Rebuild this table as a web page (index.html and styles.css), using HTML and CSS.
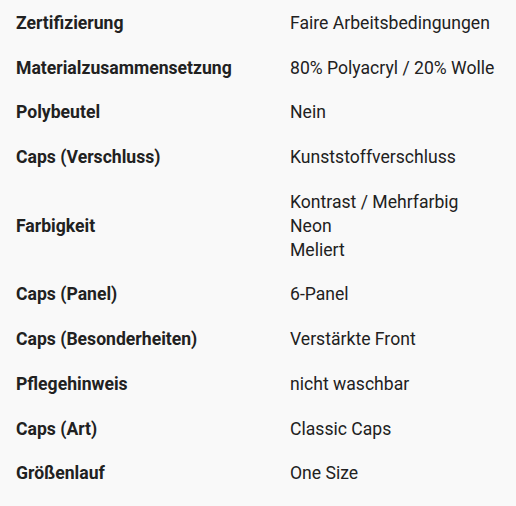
FILE: index.html
```html
<!DOCTYPE html>
<html lang="de">
<head>
<meta charset="utf-8">
<link rel="stylesheet" href="styles.css">
</head>
<body>
<dl class="specs">
  <div class="row"><dt>Zertifizierung</dt><dd>Faire Arbeitsbedingungen</dd></div>
  <div class="row"><dt>Materialzusammensetzung</dt><dd>80% Polyacryl / 20% Wolle</dd></div>
  <div class="row"><dt>Polybeutel</dt><dd>Nein</dd></div>
  <div class="row"><dt>Caps (Verschluss)</dt><dd>Kunststoffverschluss</dd></div>
  <div class="row"><dt>Farbigkeit</dt><dd><span>Kontrast / Mehrfarbig</span><span>Neon</span><span>Meliert</span></dd></div>
  <div class="row"><dt>Caps (Panel)</dt><dd>6-Panel</dd></div>
  <div class="row"><dt>Caps (Besonderheiten)</dt><dd>Verstärkte Front</dd></div>
  <div class="row"><dt>Pflegehinweis</dt><dd>nicht waschbar</dd></div>
  <div class="row"><dt>Caps (Art)</dt><dd>Classic Caps</dd></div>
  <div class="row"><dt>Größenlauf</dt><dd>One Size</dd></div>
</dl>
</body>
</html>
```

FILE: styles.css
```css
html, body {
  margin: 0;
  padding: 0;
  background: #f9f9f9;
}
body {
  font-family: Roboto, "Liberation Sans", sans-serif;
  font-size: 17.6px;
  line-height: 24px;
  color: #212121;
}
.specs {
  margin: 0;
  padding: 0 16px;
}
.row {
  display: grid;
  grid-template-columns: 274px 1fr;
  align-items: center;
  padding: 11px 0 9.7px;
}
dt {
  font-weight: 700;
}
dd {
  margin: 0;
  display: flex;
  flex-direction: column;
}
```
